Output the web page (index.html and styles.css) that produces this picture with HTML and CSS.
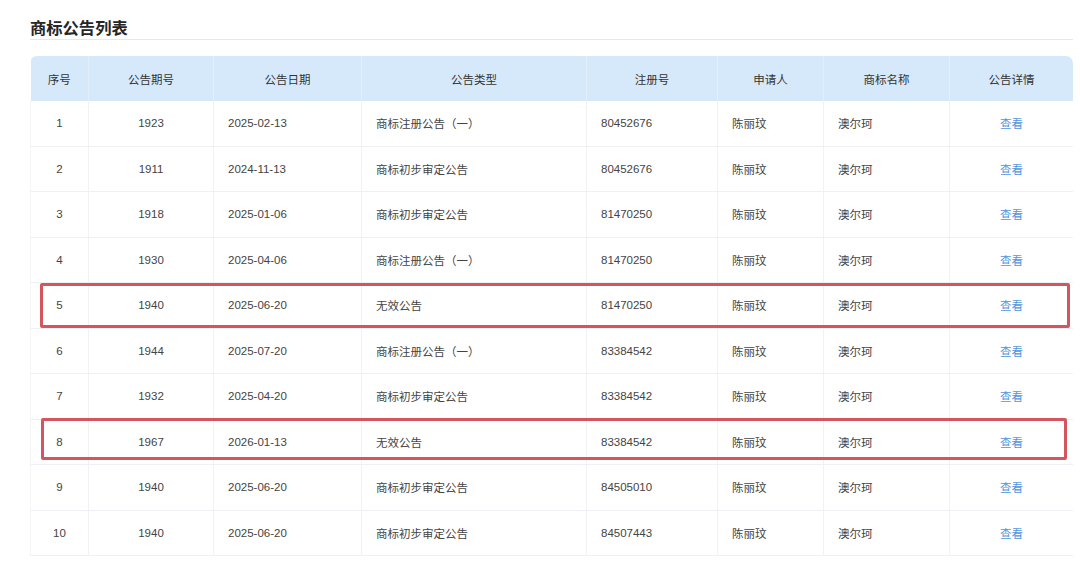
FILE: index.html
```html
<!DOCTYPE html>
<html lang="zh-CN">
<head>
<meta charset="utf-8">
<title>商标公告列表</title>
<link rel="stylesheet" href="styles.css">
</head>
<body>
<div class="page">
  <h2 class="title">商标公告列表</h2>
  <div class="table-wrap">
    <div class="table-clip">
      <table class="grid">
        <colgroup>
          <col style="width:58px"><col style="width:125px"><col style="width:148px"><col style="width:225px"><col style="width:131px"><col style="width:106px"><col style="width:126px"><col style="width:124px">
        </colgroup>
        <thead>
          <tr><th>序号</th><th>公告期号</th><th>公告日期</th><th>公告类型</th><th>注册号</th><th>申请人</th><th>商标名称</th><th>公告详情</th></tr>
        </thead>
        <tbody>
          <tr><td class="c">1</td><td class="c">1923</td><td>2025-02-13</td><td>商标注册公告（一）</td><td>80452676</td><td>陈丽玟</td><td>澳尔珂</td><td class="c"><a class="link">查看</a></td></tr>
          <tr><td class="c">2</td><td class="c">1911</td><td>2024-11-13</td><td>商标初步审定公告</td><td>80452676</td><td>陈丽玟</td><td>澳尔珂</td><td class="c"><a class="link">查看</a></td></tr>
          <tr><td class="c">3</td><td class="c">1918</td><td>2025-01-06</td><td>商标初步审定公告</td><td>81470250</td><td>陈丽玟</td><td>澳尔珂</td><td class="c"><a class="link">查看</a></td></tr>
          <tr><td class="c">4</td><td class="c">1930</td><td>2025-04-06</td><td>商标注册公告（一）</td><td>81470250</td><td>陈丽玟</td><td>澳尔珂</td><td class="c"><a class="link">查看</a></td></tr>
          <tr><td class="c">5</td><td class="c">1940</td><td>2025-06-20</td><td>无效公告</td><td>81470250</td><td>陈丽玟</td><td>澳尔珂</td><td class="c"><a class="link">查看</a></td></tr>
          <tr><td class="c">6</td><td class="c">1944</td><td>2025-07-20</td><td>商标注册公告（一）</td><td>83384542</td><td>陈丽玟</td><td>澳尔珂</td><td class="c"><a class="link">查看</a></td></tr>
          <tr><td class="c">7</td><td class="c">1932</td><td>2025-04-20</td><td>商标初步审定公告</td><td>83384542</td><td>陈丽玟</td><td>澳尔珂</td><td class="c"><a class="link">查看</a></td></tr>
          <tr><td class="c">8</td><td class="c">1967</td><td>2026-01-13</td><td>无效公告</td><td>83384542</td><td>陈丽玟</td><td>澳尔珂</td><td class="c"><a class="link">查看</a></td></tr>
          <tr><td class="c">9</td><td class="c">1940</td><td>2025-06-20</td><td>商标初步审定公告</td><td>84505010</td><td>陈丽玟</td><td>澳尔珂</td><td class="c"><a class="link">查看</a></td></tr>
          <tr><td class="c">10</td><td class="c">1940</td><td>2025-06-20</td><td>商标初步审定公告</td><td>84507443</td><td>陈丽玟</td><td>澳尔珂</td><td class="c"><a class="link">查看</a></td></tr>
        </tbody>
      </table>
    </div>
    <div class="mark mark-a"></div>
    <div class="mark mark-b"></div>
  </div>
</div>
</body>
</html>
```
FILE: styles.css
```css
html, body {
  margin: 0;
  padding: 0;
  background: #ffffff;
}
body {
  font-family: "Liberation Sans", "Noto Sans CJK SC", sans-serif;
  color: #444444;
}
.page {
  padding: 0 7px 0 30px;
}
.title {
  margin: 0;
  padding: 16px 0 1px 0;
  line-height: 22px;
  font-size: 16.3px;
  font-weight: bold;
  color: #262626;
  font-family: "Noto Sans CJK SC", sans-serif;
  border-bottom: 1px solid #e8e8e8;
}
.table-wrap {
  position: relative;
  margin-top: 16px;
  width: 1043px;
}
.table-clip {
  border-radius: 7px 7px 0 0;
  overflow: hidden;
}
.grid {
  width: 100%;
  border-collapse: collapse;
  table-layout: fixed;
  font-size: 11.5px;
}
.grid th {
  height: 45px;
  padding: 0;
  background: #d6e9fb;
  font-weight: normal;
  color: #333333;
  text-align: center;
  border-right: 1px solid #e3eefb;
}
.grid th:last-child,
.grid td:last-child {
  border-right: 1px solid #eff0f3;
}
.grid td {
  height: 44.5px;
  padding: 0 0 0 14px;
  text-align: left;
  border-bottom: 1px solid #eef0f3;
  border-right: 1px solid #f1f2f4;
  white-space: nowrap;
}
.grid td:first-child {
  border-left: 1px solid #f3f4f6;
}
.grid td.c {
  text-align: center;
  padding: 0;
}
.link {
  color: #4f95dc;
  cursor: pointer;
}
.mark {
  position: absolute;
  border: 3px solid #d4555e;
  border-radius: 2px;
  box-sizing: border-box;
  pointer-events: none;
}
.mark-a {
  left: 10px;
  top: 227px;
  width: 1030px;
  height: 45px;
}
.mark-b {
  left: 11px;
  top: 362px;
  width: 1026px;
  height: 42px;
}
```
